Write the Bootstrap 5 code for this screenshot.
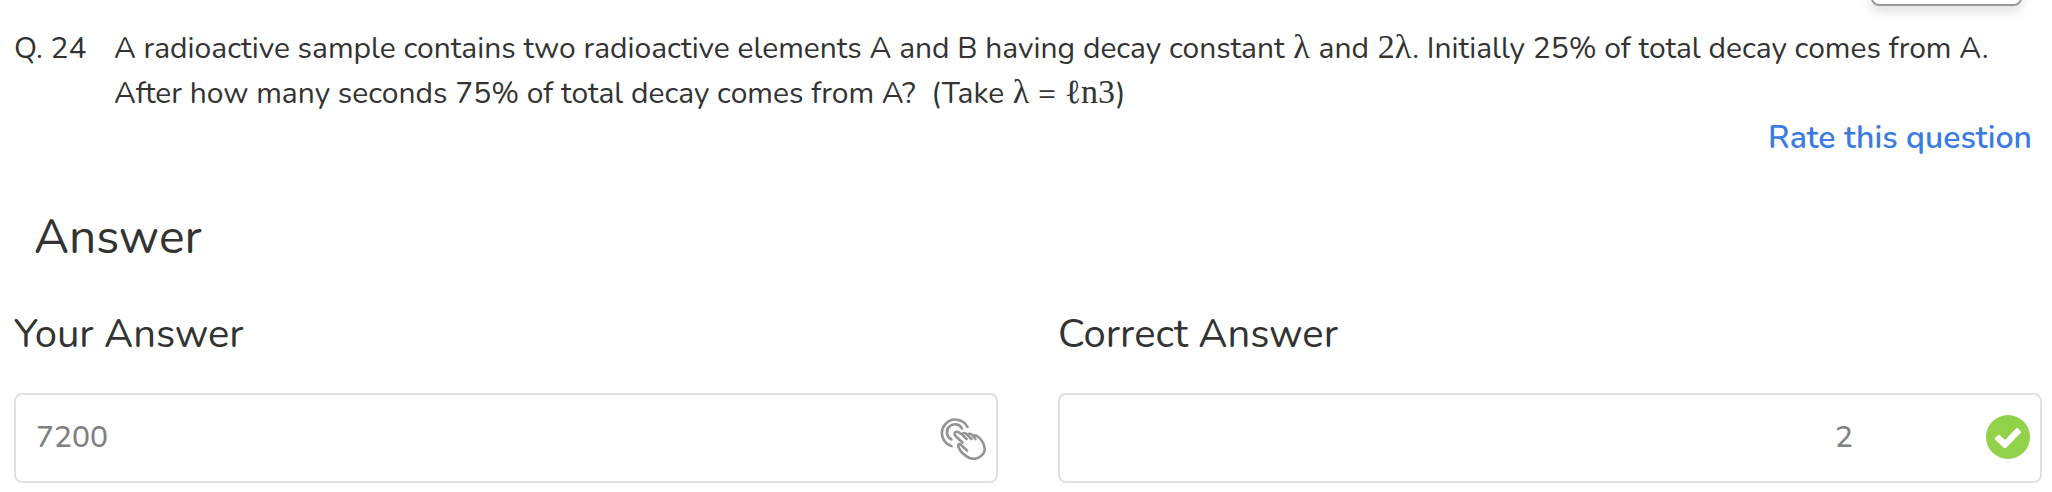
<!DOCTYPE html>
<html lang="en">
<head>
<meta charset="utf-8">
<meta name="viewport" content="width=device-width, initial-scale=1">
<title>Question 24</title>
<link href="https://cdn.jsdelivr.net/npm/bootstrap@5.3.0/dist/css/bootstrap.min.css" rel="stylesheet">
<style>
  body { font-family: Nunito, Lato, sans-serif; font-size: 30px; line-height: 45px; color: #333; background: #fff; overflow-x: hidden; }
  .page { padding: 0 10px 0 14px; }
  .toolbar { height: 26px; padding-right: 20px; }
  .toolbar-btn { width: 151px; height: 50px; margin-top: -44px; background: #fff; border: 2px solid #999; border-radius: 8px; box-shadow: 0 6px 12px rgba(0,0,0,.12); }
  .q-number { width: 100px; }
  .math { font-family: "Liberation Serif", serif; font-size: 34px; line-height: 1; margin: 0 1px; }
  .rate { display: block; width: fit-content; color: #3c7be2; font-size: 32px; line-height: 44px; font-weight: 600; text-decoration: none; margin-right: 10px; }
  .title { font-size: 48px; line-height: 60px; padding-left: 20px; margin: 47px 0 42px; }
  .answers { column-gap: 60px; }
  .answer-label { font-size: 40px; line-height: 50px; margin-bottom: 34px; }
  .answer-box { height: 90px; border: 2px solid #e0e0e0; border-radius: 8px; padding: 0 10px 2px 20px; }
  .answer-box input { color: #808080; font-weight: 500; background: none; border: 0; outline: 0; padding: 0; min-width: 0; }
  .answer-box .correct { padding-right: 133px; }
</style>
</head>
<body>
<main class="page">
  <div class="toolbar d-flex justify-content-end align-items-start">
    <button type="button" class="toolbar-btn flex-shrink-0" aria-label="Options"></button>
  </div>

  <div class="d-flex">
    <div class="q-number flex-shrink-0">Q. 24</div>
    <div class="flex-grow-1">A radioactive sample contains two radioactive elements A and B having decay constant <span class="math">λ</span> and <span class="math">2λ</span>. Initially 25% of total decay comes from A.<br>After how many seconds 75% of total decay comes from A?&nbsp; (Take <span class="math">λ</span> = <span class="math">ℓn3</span>)</div>
  </div>
  <a href="#rate" class="rate ms-auto">Rate this question</a>

  <h1 class="title fw-normal">Answer</h1>

  <div class="answers d-flex">
    <div class="flex-fill w-50">
      <label for="yours" class="answer-label d-block">Your Answer</label>
      <div class="answer-box d-flex align-items-center">
        <input id="yours" class="flex-grow-1" type="text" value="7200" readonly>
        <svg class="flex-shrink-0 mt-1" width="46" height="42" viewBox="0 0 46 42" fill="none" stroke="#949494" stroke-width="2.6" stroke-linecap="round" stroke-linejoin="round" aria-hidden="true">
          <path d="M11.500 28A13.500 13.500 0 1 1 27.500 9"/>
          <path d="M11.500 21.500A8 8 0 1 1 22 10.500"/>
          <path d="M27 32.500L20.500 26.500C18.500 25 18 27 18.500 29C19.500 33 25 38 29.500 40C38 43 46 36 44.500 29C43.500 24.500 40 20 37 18C35.500 17 33.500 17 33 18L35.500 21M33 18C31.500 15.500 28.500 15 27.500 17L31.500 21M27.500 17C25.500 14.500 23 14.500 22 16.500L26.500 21M22 16.500L18 14C15 13 13.500 15.500 15.500 18L22.500 24.500"/>
        </svg>
      </div>
    </div>
    <div class="flex-fill w-50">
      <label for="correct" class="answer-label d-block">Correct Answer</label>
      <div class="answer-box d-flex align-items-center">
        <input id="correct" class="correct flex-grow-1 text-end" type="text" value="2" readonly>
        <svg class="flex-shrink-0" width="44" height="44" viewBox="0 0 44 44" aria-hidden="true">
          <circle cx="22" cy="22" r="22" fill="#92d24a"/>
          <path d="M9 24.500Q8.500 23.500 9.500 22.500L12 20.200Q13 19.500 14 20.200L19 25L30 13.500Q31 12.500 32 13.500L34.500 16Q35.500 17 34.500 18L20.500 32.500Q19 33.800 17.500 32.500Z" fill="#fff"/>
        </svg>
      </div>
    </div>
  </div>
</main>
<script src="https://cdn.jsdelivr.net/npm/bootstrap@5.3.0/dist/js/bootstrap.bundle.min.js"></script>
</body>
</html>
